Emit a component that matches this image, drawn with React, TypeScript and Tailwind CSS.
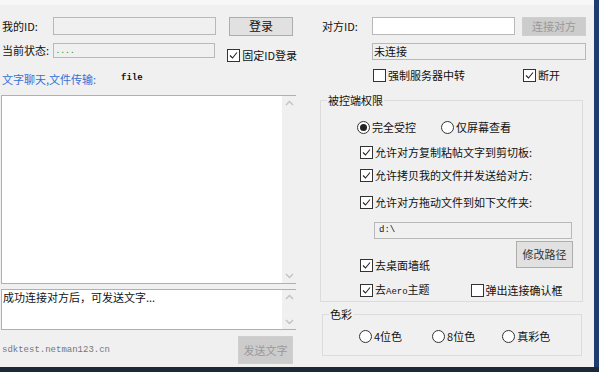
import React from 'react';

const font = "font-['Noto_Sans_CJK_SC','Noto_Sans',sans-serif]";

const Check = ({ checked }: { checked?: boolean }) => (
  <span className="inline-flex w-[13px] h-[13px] border border-[#333] bg-white items-center justify-center shrink-0">
    {checked && (
      <svg width="9" height="9" viewBox="0 0 9 9">
        <path d="M1 4.5 L3.5 7 L8 1.5" fill="none" stroke="#222" strokeWidth="1.1" />
      </svg>
    )}
  </span>
);

const Radio = ({ checked }: { checked?: boolean }) => (
  <span className="inline-flex w-[13px] h-[13px] rounded-full border border-[#333] bg-white items-center justify-center shrink-0">
    {checked && <span className="w-[7px] h-[7px] rounded-full bg-[#222]" />}
  </span>
);

const CheckLabel = ({ checked, children, className = '' }: { checked?: boolean; children: React.ReactNode; className?: string }) => (
  <div className={`flex items-center gap-[2px] text-[11px] text-[#111] leading-none whitespace-nowrap ${className}`}>
    <Check checked={checked} />
    <span>{children}</span>
  </div>
);

const RadioLabel = ({ checked, children, className = '' }: { checked?: boolean; children: React.ReactNode; className?: string }) => (
  <div className={`flex items-center gap-[2px] text-[11px] text-[#111] leading-none whitespace-nowrap ${className}`}>
    <Radio checked={checked} />
    <span>{children}</span>
  </div>
);

const ScrollBar = () => (
  <div className="w-[14px] h-full bg-[#f0f0f0] flex flex-col justify-between items-center py-[4px]">
    <svg width="9" height="6" viewBox="0 0 9 6"><path d="M1 5 L4.5 1.5 L8 5" fill="none" stroke="#c2c2c2" strokeWidth="1.4" /></svg>
    <svg width="9" height="6" viewBox="0 0 9 6"><path d="M1 1 L4.5 4.5 L8 1" fill="none" stroke="#c2c2c2" strokeWidth="1.4" /></svg>
  </div>
);

const App = () => {
  return (
    <div className={`w-[599px] h-[372px] bg-[#1b2838] flex flex-col overflow-hidden ${font}`}>
      <div className="flex h-[367px]">
        <div className="w-[594px] h-full bg-[#f0f0f0] flex border-t-[5px] border-[#f7f7f7]">
          {/* left column */}
          <div className="w-[296px] ml-[1px] flex flex-col pt-[12px]">
            <div className="flex items-center h-[18px]">
              <span className="w-[52px] pl-[1px] text-[11px] text-[#111] whitespace-nowrap">我的ID:</span>
              <div className="w-[163px] h-[18px] border border-[#b8b8b8] bg-[#f0f0f0]" />
              <button className="ml-[13px] w-[64px] h-[19px] border border-[#adadad] bg-[#e1e1e1] text-[12px] text-[#111] leading-none">登录</button>
            </div>
            <div className="flex items-start h-[19px] mt-[8px]">
              <span className="w-[52px] pl-[1px] text-[11px] text-[#111] leading-[15px] whitespace-nowrap">当前状态:</span>
              <div className="w-[164px] h-[15px] border border-[#b8b8b8] bg-[#f0f0f0] text-[#2ea02e] text-[10px] leading-[10px] pl-[3px] tracking-[2px]">....</div>
              <CheckLabel checked className="ml-[12px] mt-[6px]">固定ID登录</CheckLabel>
            </div>
            <div className="flex items-center h-[16px] mt-[9px]">
              <span className="w-[120px] pl-[1px] text-[11px] text-[#3370d6] whitespace-nowrap">文字聊天,文件传输:</span>
              <span className="font-['Liberation_Mono',monospace] text-[9px] text-[#111] font-bold">file</span>
            </div>
            <div className="mt-[8px] h-[189px] w-[295px] border border-[#b0b0b0] border-r-0 bg-white flex">
              <div className="flex-1" />
              <ScrollBar />
            </div>
            <div className="mt-[5px] h-[41px] w-[295px] border border-[#b0b0b0] border-r-0 bg-white flex">
              <div className="flex-1 text-[11px] text-[#111] leading-[15px] pl-[1px]">成功连接对方后，可发送文字...</div>
              <ScrollBar />
            </div>
            <div className="mt-[6px] flex items-end justify-between w-[292px]">
              <span className="font-['Liberation_Mono',monospace] text-[9px] text-[#777] pl-[1px] pb-[7px]">sdktest.netman123.cn</span>
              <button className="w-[55px] h-[28px] border border-[#cfcfcf] bg-[#cccccc] text-[11px] text-[#999] leading-none">发送文字</button>
            </div>
          </div>

          {/* right column */}
          <div className="ml-[23px] w-[268px] flex flex-col pt-[12px]">
            <div className="flex items-center h-[18px]">
              <span className="w-[52px] pl-[2px] text-[11px] text-[#111] whitespace-nowrap">对方ID:</span>
              <div className="w-[143px] h-[18px] border border-[#b8b8b8] bg-white" />
              <button className="ml-[7px] w-[64px] h-[19px] border border-[#cfcfcf] bg-[#cccccc] text-[11px] text-[#999] leading-none">连接对方</button>
            </div>
            <div className="ml-[52px] mt-[8px] w-[214px] h-[17px] border border-[#b8b8b8] bg-[#f0f0f0] text-[11px] text-[#111] leading-[14px] pl-[1px]">未连接</div>
            <div className="flex items-center mt-[8px] h-[14px]">
              <CheckLabel className="ml-[53px]">强制服务器中转</CheckLabel>
              <CheckLabel checked className="ml-[58px]">断开</CheckLabel>
            </div>
            <fieldset className="mt-[11px] w-[263px] h-[209px] border border-[#dcdcdc] px-0 pt-0 pb-0">
              <legend className="ml-[6px] px-[1px] text-[11px] text-[#111] leading-[14px]">被控端权限</legend>
              <div className="flex items-center mt-[13px] h-[14px]">
                <RadioLabel checked className="ml-[36px]">完全受控</RadioLabel>
                <RadioLabel className="ml-[25px]">仅屏幕查看</RadioLabel>
              </div>
              <CheckLabel checked className="ml-[39px] mt-[11px] h-[14px]">允许对方复制粘帖文字到剪切板:</CheckLabel>
              <CheckLabel checked className="ml-[39px] mt-[9px] h-[14px]">允许拷贝我的文件并发送给对方:</CheckLabel>
              <CheckLabel checked className="ml-[39px] mt-[13px] h-[14px]">允许对方拖动文件到如下文件夹:</CheckLabel>
              <div className="ml-[53px] mt-[13px] w-[198px] h-[17px] border border-[#b8b8b8] bg-[#f0f0f0] font-['Liberation_Mono',monospace] text-[9px] text-[#111] leading-[15px] pl-[4px]">d:\</div>
              <div className="flex justify-end mr-[9px] mt-[2px]">
                <button className="w-[57px] h-[27px] border border-[#adadad] bg-[#e1e1e1] text-[11px] text-[#333] leading-none">修改路径</button>
              </div>
              <CheckLabel checked className="ml-[39px] -mt-[10px] h-[14px]">去桌面墙纸</CheckLabel>
              <div className="flex items-center mt-[11px] h-[14px]">
                <CheckLabel checked className="ml-[39px]">去<span className="font-['Liberation_Mono',monospace] text-[9px]">Aero</span>主题</CheckLabel>
                <CheckLabel className="ml-[41px]">弹出连接确认框</CheckLabel>
              </div>
            </fieldset>
            <fieldset className="mt-[5px] ml-[2px] w-[260px] h-[49px] border border-[#dcdcdc] px-0 pt-0 pb-0">
              <legend className="ml-[6px] px-[1px] text-[11px] text-[#111] leading-[14px]">色彩</legend>
              <div className="flex items-center mt-[8px] h-[14px]">
                <RadioLabel className="ml-[36px]">4位色</RadioLabel>
                <RadioLabel className="ml-[30px]">8位色</RadioLabel>
                <RadioLabel className="ml-[27px]">真彩色</RadioLabel>
              </div>
            </fieldset>
          </div>
        </div>
        <div className="flex-1 bg-[#1c3d6e]" />
      </div>
    </div>
  );
};

export default App;
